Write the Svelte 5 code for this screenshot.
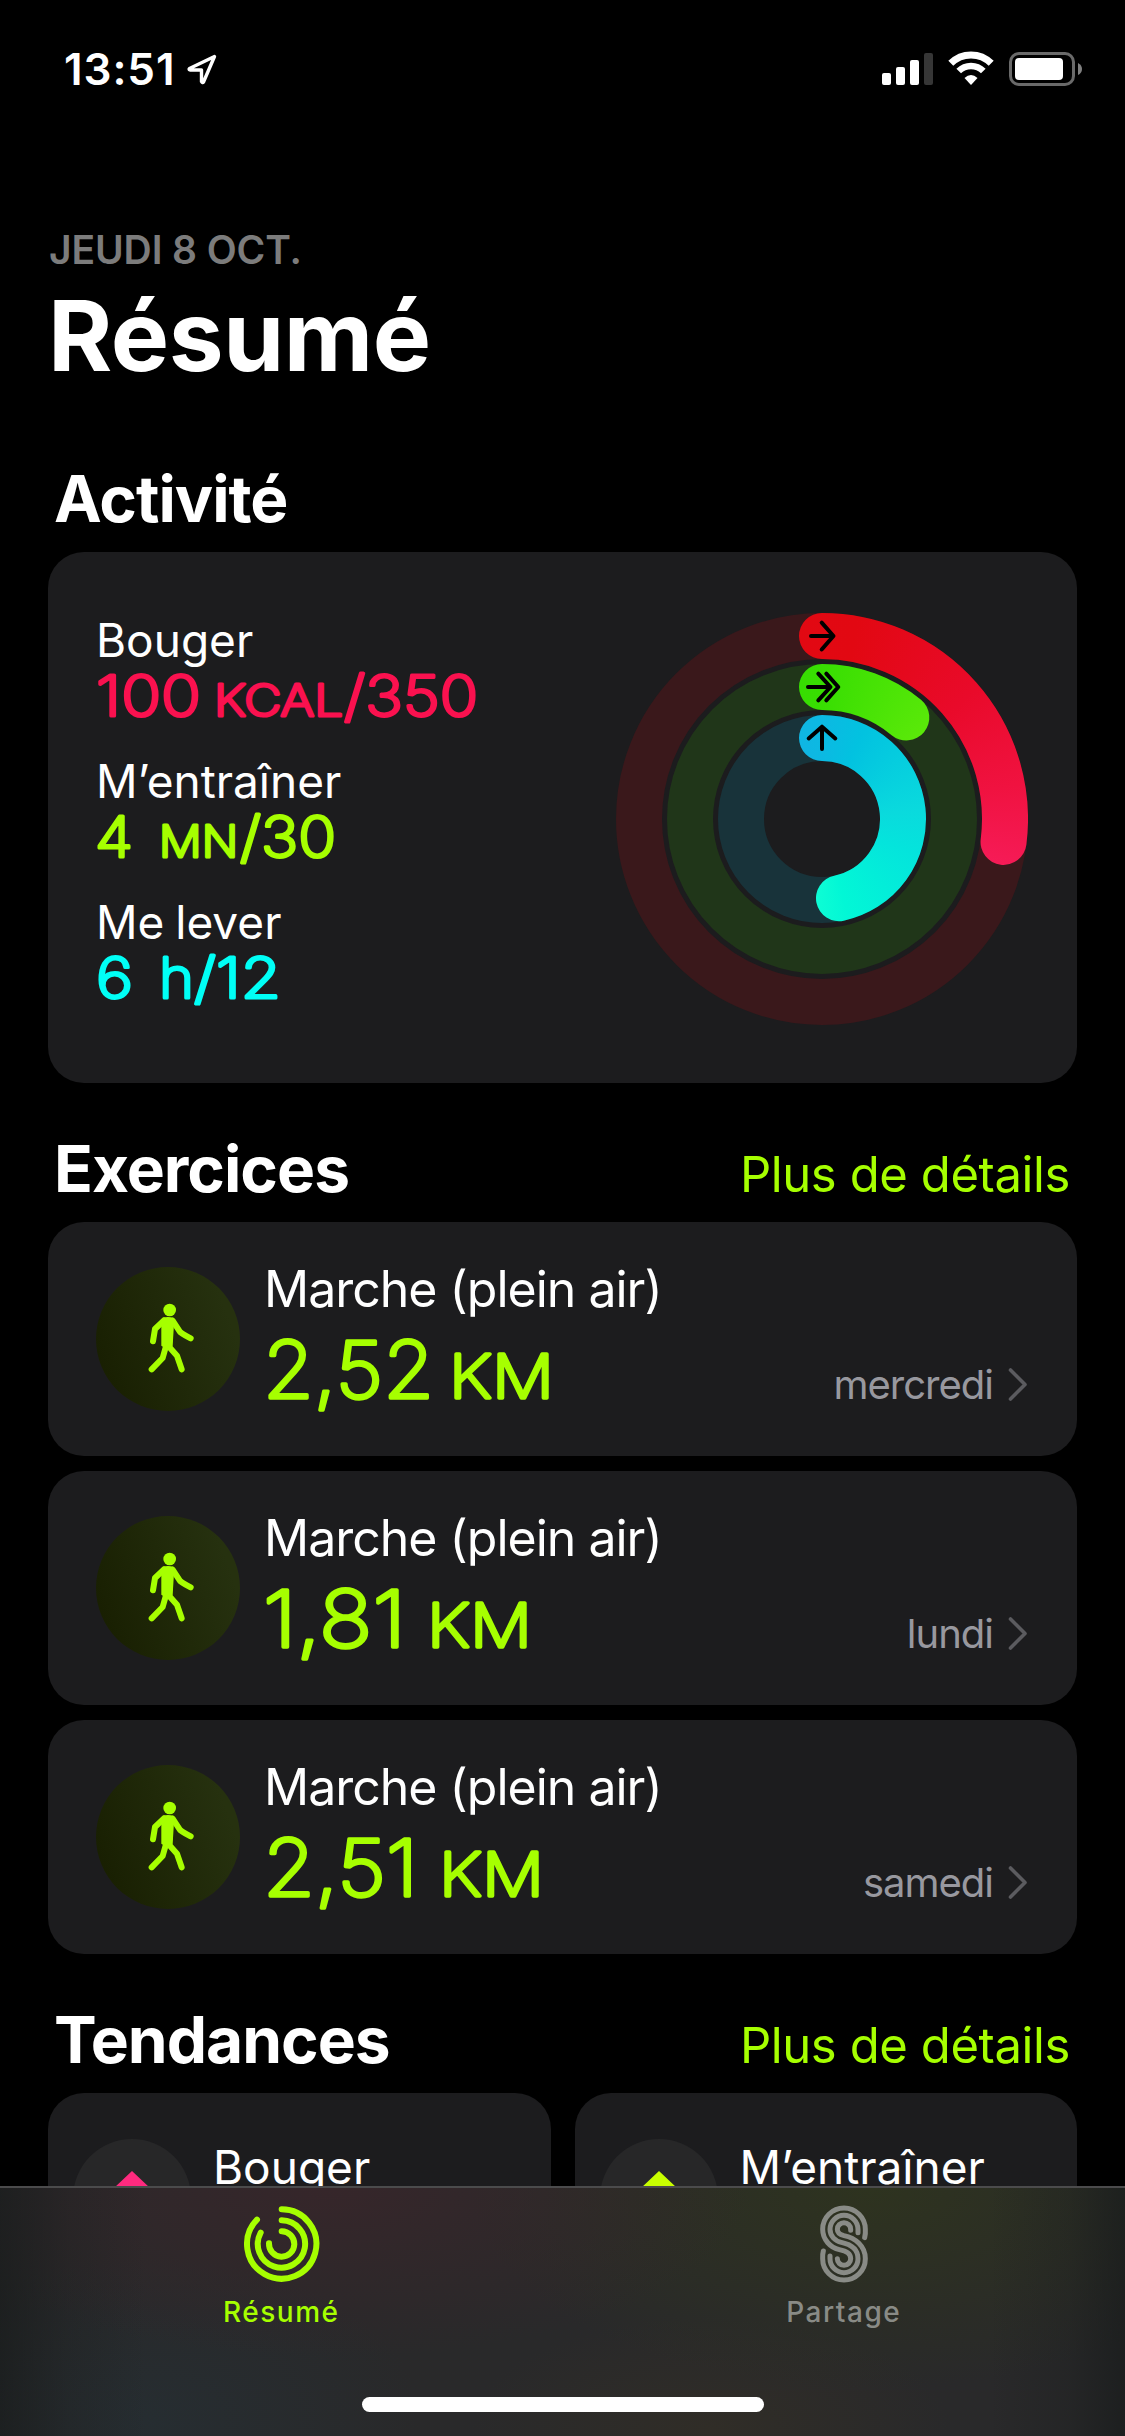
<script lang="ts">
	type Part = { text: string; x: number; width: number; unit?: boolean };

	const goals: { label: string; color: string; parts: Part[] }[] = [
		{
			label: 'Bouger',
			color: '#fa114f',
			parts: [
				{ text: '100', x: 0, width: 105 },
				{ text: 'KCAL', x: 118, width: 129, unit: true },
				{ text: '/350', x: 248, width: 134 },
			],
		},
		{
			label: 'M’entraîner',
			color: '#a6ff00',
			parts: [
				{ text: '4', x: -1, width: 38 },
				{ text: 'MN', x: 63, width: 79, unit: true },
				{ text: '/30', x: 144, width: 96 },
			],
		},
		{
			label: 'Me lever',
			color: '#00fff6',
			parts: [
				{ text: '6', x: 0, width: 37 },
				{ text: 'h', x: 63, width: 35 },
				{ text: '/12', x: 98, width: 87 },
			],
		},
	];

	const workouts: { day: string; parts: Part[] }[] = [
		{ day: 'mercredi', parts: [{ text: '2,52', x: -1, width: 171 }, { text: 'KM', x: 185, width: 105, unit: true }] },
		{ day: 'lundi', parts: [{ text: '1,81', x: -1, width: 143 }, { text: 'KM', x: 163, width: 105, unit: true }] },
		{ day: 'samedi', parts: [{ text: '2,51', x: -1, width: 155 }, { text: 'KM', x: 175, width: 105, unit: true }] },
	];

	const trends = [
		{ label: 'Bouger', color: '#ff2a7f' },
		{ label: 'M’entraîner', color: '#c8ff00' },
	];

	const C = 206;

	const rings = [
		{
			id: 'move', r: 183, end: 97.2, track: '#3a181b',
			stops: '#e20a13 0deg, #e20812 45deg, #e90a2a 85deg, #f01240 115deg, #f71d5c 145deg',
			glyph: 'M195 23H217M205.700 9.700L217.500 23L205.700 36.500',
		},
		{
			id: 'exercise', r: 132, end: 39.7, track: '#203619',
			stops: '#35dc00 0deg, #38de02 35deg, #5eea0a 90deg',
			glyph: 'M192 74H214M202.300 60.700L214.500 74L202.300 87.300M210.300 60.700L222.300 74L210.300 87.300',
		},
		{
			id: 'stand', r: 81, end: 167.9, track: '#18333a',
			stops: '#14b2e4 0deg, #0cb9e2 35deg, #02c2e0 60deg, #0adadd 120deg, #04e4dc 145deg, #02f7d6 200deg, #12ffd4 225deg',
			glyph: 'M206 136V114M192.700 125.500L206 113.700L219.300 125.500',
		},
	];

	function arc(r: number, deg: number) {
		const a = (deg * Math.PI) / 180;
		const x = C + r * Math.sin(a);
		const y = C - r * Math.cos(a);
		return `M${C} ${C - r}A${r} ${r} 0 ${deg > 180 ? 1 : 0} 1 ${x} ${y}`;
	}
</script>

{#snippet sectionHead(title: string, link: boolean)}
	<div class="section-head">
		<h2>{title}</h2>
		{#if link}<span class="more">Plus de détails</span>{/if}
	</div>
{/snippet}

{#snippet figures(parts: Part[], y: number)}
	{#each parts as part}
		<text class:unit={part.unit} x={part.x} {y} textLength={part.width} lengthAdjust="spacingAndGlyphs">{part.text}</text>
	{/each}
{/snippet}

<div class="screen">
	<header class="status">
		<div class="clock">
			<span>13:51</span>
			<svg width="32" height="32" viewBox="0 0 32 32">
				<path d="M28.500 3.500L3.500 15.500Q2.500 16.500 4 17H15.500V28.500Q16.500 30.500 17.500 29Z" fill="none" stroke="#fff" stroke-width="3.400" stroke-linejoin="round" />
			</svg>
		</div>
		<svg width="204" height="36" viewBox="0 0 204 36">
			<rect x="2" y="22" width="9" height="12" rx="2" fill="#fff" />
			<rect x="16" y="16" width="9" height="18" rx="2" fill="#fff" />
			<rect x="30" y="9" width="9" height="25" rx="2" fill="#fff" />
			<rect x="44" y="2" width="9" height="32" rx="2" fill="#363636" />
			<g fill="none" stroke="#fff">
				<path d="M70.800 12.300A28.500 28.500 0 0 1 111.200 12.300" stroke-width="7" />
				<path d="M78.700 20A17.500 17.500 0 0 1 103.300 20" stroke-width="6.600" />
			</g>
			<path d="M91 34L84.500 27Q91 21 97.500 27Z" fill="#fff" />
			<rect x="130.500" y="2.500" width="63" height="31" rx="8.500" fill="none" stroke="#6a6a6a" stroke-width="3" />
			<rect x="135" y="7" width="48" height="22" rx="4" fill="#fff" />
			<path d="M198 12Q202 14 202 18T198 24Z" fill="#808080" />
		</svg>
	</header>

	<main>
		<p class="date">JEUDI 8 OCT.</p>
		<h1>Résumé</h1>

		{@render sectionHead('Activité', false)}
		<section class="card activity">
			<div class="goals">
				{#each goals as goal}
					<div class="goal">
						<span class="label">{goal.label}</span>
						<svg class="value" width="400" height="60" fill={goal.color} stroke={goal.color}>
							{@render figures(goal.parts, 48)}
						</svg>
					</div>
				{/each}
			</div>
			<svg class="rings" width="412" height="412" viewBox="0 0 412 412">
				{#each rings as ring}
					<mask id={ring.id} maskUnits="userSpaceOnUse" x="0" y="0" width="412" height="412">
						<path d={arc(ring.r, ring.end)} fill="none" stroke="#fff" stroke-width="46" stroke-linecap="round" />
					</mask>
					<circle cx={C} cy={C} r={ring.r} fill="none" stroke={ring.track} stroke-width="46" />
					<g mask="url(#{ring.id})">
						<foreignObject width="412" height="412">
							<div class="sweep" style="background: conic-gradient(from -35deg, {ring.stops})"></div>
						</foreignObject>
					</g>
					<path d={ring.glyph} fill="none" stroke="#000" stroke-width="4" stroke-linecap="round" stroke-linejoin="round" />
				{/each}
			</svg>
		</section>

		{@render sectionHead('Exercices', true)}
		<div class="workouts">
			{#each workouts as workout}
				<section class="card workout">
					<div class="disc">
						<svg width="144" height="144" viewBox="18 50 432 432">
							<circle cx="239" cy="179" r="19" fill="#a6ff00" />
							<path d="M218 202Q234 198 250 202L252 220L248 288Q232 302 214 286L214 220Z" fill="#a6ff00" />
							<g fill="none" stroke="#a6ff00" stroke-width="18" stroke-linecap="round" stroke-linejoin="round">
								<path d="M222 210L195 236L189 273" />
								<path d="M248 211L269 243Q272 248 302 264" />
								<path d="M229 284L218 323L185 357" />
								<path d="M235 287L261 316L275 357" />
							</g>
						</svg>
					</div>
					<div class="info">
						<span class="name">Marche (plein air)</span>
						<svg class="distance" width="320" height="96">
							{@render figures(workout.parts, 78.5)}
						</svg>
					</div>
					<div class="day">
						<span>{workout.day}</span>
						<svg width="20" height="36" viewBox="0 0 20 36">
							<path d="M2.500 3L17 17.500L2.500 32" fill="none" stroke="#5b5b5f" stroke-width="3.600" stroke-linecap="round" stroke-linejoin="round" />
						</svg>
					</div>
				</section>
			{/each}
		</div>

		{@render sectionHead('Tendances', true)}
		<div class="trends">
			{#each trends as trend}
				<section class="card trend">
					<svg width="118" height="118" viewBox="0 0 118 118">
						<circle cx="59" cy="59" r="59" fill="#272728" />
						<path d="M59 32L95 66H71V88H47V66H23Z" fill={trend.color} />
					</svg>
					<span class="label">{trend.label}</span>
				</section>
			{/each}
		</div>
	</main>

	<nav>
		<div class="tab active">
			<svg width="84" height="84" viewBox="58 36 252 252" fill="none" stroke="currentColor" stroke-width="18" stroke-linecap="round">
				<path d="M186 58A104 104 0 1 1 112 89" />
				<path d="M186 91A71 71 0 1 1 123 128" />
				<path d="M186 124A38 38 0 1 1 148 160" />
			</svg>
			<span>Résumé</span>
		</div>
		<div class="tab">
			<svg width="84" height="84" viewBox="96 36 252 252" fill="none" stroke="currentColor" stroke-width="15" stroke-linecap="round">
				<path d="M284 143Q287 130 286 118A64 64 0 0 0 158 118C158 150 182 173 208 179C230 184 242 190 242 206A20 20 0 0 1 202 206" />
				<path d="M264 128V118A42 42 0 0 0 180 118C180 138 195 153 214 157C243 163 264 178 264 206A42 42 0 0 1 180 206V198" />
				<path d="M242 121V118A20 20 0 0 0 202 118C202 128 209 134 222 137C256 144 286 168 286 206A64 64 0 0 1 158 206Q157 194 160 183" />
			</svg>
			<span>Partage</span>
		</div>
		<div class="home"></div>
	</nav>
</div>

<style>
	:global(body) {
		background: #000;
	}

	.screen {
		position: relative;
		width: 1125px;
		height: 2436px;
		overflow: hidden;
		background: #000;
		color: #fff;
		font-family: Inter, 'Liberation Sans', sans-serif;
	}

	h1, h2, p {
		margin: 0;
	}

	svg {
		display: block;
		overflow: visible;
	}

	.status {
		box-sizing: border-box;
		height: 226px;
		padding: 42px 41px 0 64px;
		display: flex;
		justify-content: space-between;
		align-items: flex-start;
	}

	.status > svg {
		margin-top: 9px;
	}

	.clock {
		display: flex;
		align-items: center;
		gap: 11px;
		font-size: 44px;
		line-height: 54px;
		font-weight: 600;
		letter-spacing: 0.9px;
	}

	main {
		padding: 0 48px;
	}

	.date {
		margin-left: 1px;
		font-size: 39px;
		line-height: 48px;
		font-weight: 600;
		letter-spacing: -0.1px;
		color: #7c7c7c;
	}

	h1 {
		margin: 4px 0 66px;
		font-size: 98px;
		line-height: 116px;
		font-weight: 700;
		letter-spacing: -0.4px;
	}

	.section-head {
		display: flex;
		justify-content: space-between;
		align-items: baseline;
		height: 78px;
		margin: 0 7px 14px 6px;
	}

	h2 {
		font-size: 64px;
		line-height: 78px;
		font-weight: 700;
		letter-spacing: -1px;
	}

	.more {
		font-size: 49px;
		letter-spacing: -0.4px;
		color: #a6ff00;
	}

	.card {
		box-sizing: border-box;
		border-radius: 36px;
		background: #1c1c1e;
	}

	.activity {
		display: flex;
		justify-content: space-between;
		align-items: flex-start;
		height: 531px;
		margin-bottom: 47px;
		padding: 60px 49px 0 48px;
	}

	.goals {
		display: flex;
		flex-direction: column;
		gap: 25px;
	}

	.label {
		display: block;
		font-size: 46px;
		line-height: 56px;
		word-spacing: -2px;
	}

	.value text {
		font-size: 56px;
		font-weight: 200;
		stroke-width: 3.2px;
		stroke-linejoin: round;
	}

	.value .unit {
		font-size: 43px;
	}

	.rings {
		margin-top: 1px;
	}

	.sweep {
		width: 412px;
		height: 412px;
	}

	.workouts {
		display: flex;
		flex-direction: column;
		gap: 15px;
		margin-bottom: 47px;
	}

	.workout {
		display: flex;
		height: 234px;
		padding: 37px 49px 0 48px;
	}

	.disc {
		flex: none;
		width: 144px;
		height: 144px;
		margin: 8px 24px 0 0;
		border-radius: 50%;
		background: linear-gradient(70deg, #171d00, #26310f 85%);
	}

	.info {
		flex: 1;
	}

	.name {
		display: block;
		font-size: 50px;
		line-height: 60px;
		letter-spacing: -1px;
	}

	.distance text {
		font-size: 79px;
		font-weight: 200;
		fill: #a6ff00;
		stroke: #a6ff00;
		stroke-width: 3.4px;
		stroke-linejoin: round;
	}

	.distance .unit {
		font-size: 60px;
	}

	.day {
		display: flex;
		align-items: center;
		align-self: flex-end;
		gap: 15px;
		margin-bottom: 47px;
		font-size: 40px;
		line-height: 48px;
		letter-spacing: -1px;
		color: #98989f;
	}

	.trends {
		display: grid;
		grid-template-columns: 1fr 1fr;
		gap: 24px;
	}

	.trend {
		display: flex;
		align-items: flex-start;
		gap: 22px;
		height: 300px;
		padding: 46px 25px;
	}

	nav {
		position: absolute;
		left: 0;
		right: 0;
		bottom: 0;
		box-sizing: border-box;
		height: 250px;
		display: grid;
		grid-template-columns: 1fr 1fr;
		border-top: 2px solid #4b4b4c;
		background:
			linear-gradient(to right, rgba(24, 27, 27, 0.7), rgba(24, 27, 27, 0.25) 6%, transparent 13%, transparent 88%, rgba(24, 27, 27, 0.25) 95%, rgba(24, 27, 27, 0.7)),
			radial-gradient(420px 170px at 330px 0, #36262a, transparent),
			radial-gradient(400px 200px at 870px 0, #2e331f, transparent),
			radial-gradient(270px 160px at 150px 230px, #262d31, transparent),
			radial-gradient(240px 110px at 710px 240px, #302d27, transparent),
			#29292a;
	}

	.tab {
		display: flex;
		flex-direction: column;
		align-items: center;
		gap: 9px;
		padding-top: 14px;
		color: #898b86;
		font-size: 28px;
		line-height: 34px;
		font-weight: 500;
		letter-spacing: 1.5px;
	}

	.tab.active {
		color: #a6ff00;
	}

	.home {
		position: absolute;
		left: 362px;
		bottom: 24px;
		width: 402px;
		height: 15px;
		border-radius: 8px;
		background: #fff;
	}
</style>
